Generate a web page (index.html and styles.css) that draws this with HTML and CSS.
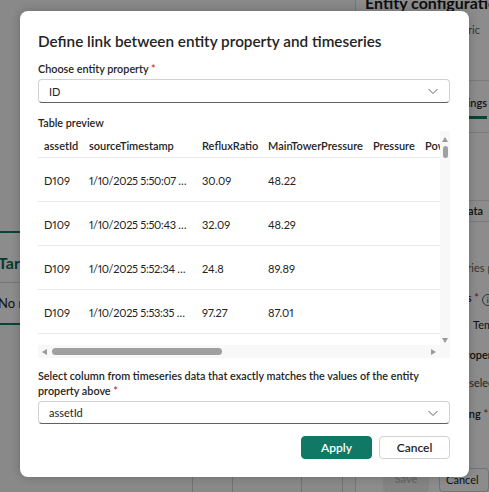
FILE: index.html
```html
<!DOCTYPE html>
<html lang="en">
<head>
<meta charset="utf-8">
<title>Define link</title>
<link rel="stylesheet" href="styles.css">
</head>
<body>
<div class="app">
  <div class="left">
    <div class="card">
      <div class="card-head">Target entity</div>
      <div class="card-body">No relationships yet</div>
    </div>
    <div class="bottom-strip">
      <div class="cell c1"></div>
      <div class="cell c2"></div>
      <div class="cell c3"></div>
      <div class="cell c4"></div>
    </div>
  </div>
  <div class="right">
    <div class="panel-title">Entity configuration</div>
    <div class="panel-sub">Microsoft Fabric</div>
    <div class="tabs"><span class="tab">Settings</span></div>
    <div class="section-head"><span>Data</span></div>
    <div class="p-line hint">Time series properties</div>
    <div class="p-line bold req-line">Properties <span class="req">*</span> <span class="info">i</span></div>
    <div class="p-line p-input">Temperature</div>
    <div class="p-line bold prop">Property</div>
    <div class="p-line sel">Not selected</div>
    <div class="p-line bold map">Mapping <span class="req">*</span></div>
    <div class="p-actions">
      <span class="btn-save">Save</span>
      <span class="btn-cancel-bg">Cancel</span>
    </div>
  </div>
</div>
<div class="overlay"></div>
<div class="dialog" role="dialog">
  <h2 class="title">Define link between entity property and timeseries</h2>
  <label class="label">Choose entity property <span class="req">*</span></label>
  <div class="dropdown">
    <span>ID</span>
    <svg class="chev" width="12" height="12" viewBox="0 0 12 12"><path d="M1.5 4 L6 8.5 L10.5 4" fill="none" stroke="#616161" stroke-width="1"/></svg>
  </div>
  <div class="label tp">Table preview</div>
  <div class="preview">
    <div class="viewport">
      <table class="grid">
        <colgroup>
          <col class="w1"><col class="w2"><col class="w3"><col class="w4"><col class="w5"><col class="w6">
        </colgroup>
        <thead>
          <tr><th>assetId</th><th>sourceTimestamp</th><th>RefluxRatio</th><th>MainTowerPressure</th><th>Pressure</th><th>Power</th></tr>
        </thead>
        <tbody>
          <tr><td>D109</td><td class="ts">1/10/2025 5:50:07 PM</td><td>30.09</td><td>48.22</td><td></td><td></td></tr>
          <tr><td>D109</td><td class="ts">1/10/2025 5:50:43 PM</td><td>32.09</td><td>48.29</td><td></td><td></td></tr>
          <tr><td>D109</td><td class="ts">1/10/2025 5:52:34 PM</td><td>24.8</td><td>89.89</td><td></td><td></td></tr>
          <tr><td>D109</td><td class="ts">1/10/2025 5:53:35 PM</td><td>97.27</td><td>87.01</td><td></td><td></td></tr>
          <tr><td>D109</td><td class="ts">1/10/2025 5:54:12 PM</td><td>51.3</td><td>60.4</td><td></td><td></td></tr>
        </tbody>
      </table>
    </div>
    <div class="vscroll">
      <span class="tri up"></span>
      <span class="vthumb"></span>
      <span class="vspace"></span>
      <span class="tri down"></span>
    </div>
    <div class="hscroll">
      <span class="tri lt"></span>
      <span class="hthumb"></span>
      <span class="hspace"></span>
      <span class="tri rt"></span>
    </div>
    <div class="corner"></div>
  </div>
  <label class="label two">Select column from timeseries data that exactly matches the values of the entity property above <span class="req">*</span></label>
  <div class="dropdown d2">
    <span>assetId</span>
    <svg class="chev" width="12" height="12" viewBox="0 0 12 12"><path d="M1.5 4 L6 8.5 L10.5 4" fill="none" stroke="#616161" stroke-width="1"/></svg>
  </div>
  <div class="actions">
    <button class="btn primary">Apply</button>
    <button class="btn">Cancel</button>
  </div>
</div>
</body>
</html>
```

FILE: styles.css
```css
html, body {
  margin: 0;
  padding: 0;
}
body {
  width: 489px;
  height: 492px;
  overflow: hidden;
  position: relative;
  font-family: Lato, "Open Sans", sans-serif;
  color: #242424;
  background: #ffffff;
}

/* background application */
.app {
  display: grid;
  grid-template-columns: 355px 134px;
  height: 492px;
}
.left {
  display: flex;
  flex-direction: column;
  background: #fafafa;
}
.card {
  margin-top: 231px;
  margin-left: -2px;
  border-top: 2px solid #117865;
  border-bottom: 2px solid #117865;
  background: #ffffff;
}
.card-head {
  font-size: 16px;
  font-weight: 700;
  color: #0e6b58;
  height: 49px;
  line-height: 60px;
  border-bottom: 1px solid #d6d6d6;
  white-space: nowrap;
}
.card-body {
  font-size: 13px;
  height: 40px;
  line-height: 40px;
  white-space: nowrap;
}
.bottom-strip {
  margin-top: auto;
  height: 16px;
  display: grid;
  grid-template-columns: 193px 40px 69px 41px;
}
.cell {
  border-right: 1px solid #d0d0d0;
}
.right {
  border-left: 1px solid #d8d8d8;
  display: flex;
  flex-direction: column;
  background: #ffffff;
  white-space: nowrap;
  font-size: 11px;
  overflow: hidden;
}
.panel-title {
  font-size: 16px;
  font-weight: 700;
  margin-top: -7px;
  padding-left: 9px;
  line-height: 20px;
  color: #1a1a1a;
}
.panel-sub {
  text-align: right;
  padding-right: 9px;
  margin-top: 7px;
  color: #616161;
  line-height: 20px;
  padding-bottom: 40px;
  border-bottom: 1px solid #e0e0e0;
}
.tabs {
  display: flex;
  justify-content: flex-end;
  padding-right: 2px;
  border-bottom: 1px solid #e0e0e0;
  height: 51px;
}
.tab {
  font-weight: 600;
  margin-top: 12px;
  line-height: 20px;
  padding-bottom: 3px;
  border-bottom: 3px solid #117865;
  align-self: flex-start;
}
.section-head {
  margin-top: 67px;
  border-top: 1px solid #e0e0e0;
  border-bottom: 1px solid #e0e0e0;
  line-height: 20px;
  text-align: right;
  padding-right: 6px;
  font-weight: 600;
}
.p-line {
  line-height: 20px;
}
.hint {
  margin-top: 36px;
  padding-left: 74px;
  color: #616161;
}
.bold { font-weight: 600; }
.req-line {
  margin-top: 10px;
  padding-left: 65px;
}
.req { color: #c4314b; }
.info {
  display: inline-block;
  width: 10px;
  height: 10px;
  border: 1px solid #616161;
  border-radius: 50%;
  font-size: 8px;
  line-height: 10px;
  text-align: center;
  font-weight: 400;
  vertical-align: -1px;
}
.p-input {
  margin-top: 7px;
  padding-left: 117px;
}
.prop {
  margin-top: 10px;
  padding-left: 103px;
}
.sel {
  margin-top: 8px;
  padding-left: 92px;
  color: #424242;
}
.map {
  margin-top: 11px;
  padding-left: 82px;
}
.p-actions {
  margin-top: auto;
  display: flex;
  gap: 10px;
  padding-left: 27px;
  height: 24px;
}
.btn-save {
  width: 88px;
  background: #f0f0f0;
  color: #bdbdbd;
  border-radius: 4px;
  text-align: center;
  line-height: 22px;
  font-weight: 600;
}
.btn-cancel-bg {
  width: 80px;
  border: 1px solid #d1d1d1;
  border-radius: 4px;
  line-height: 22px;
  padding-left: 6px;
}

.overlay {
  position: absolute;
  inset: 0;
  background: rgba(0, 0, 0, 0.45);
}

/* dialog */
.dialog {
  position: absolute;
  left: 20px;
  top: 11px;
  width: 449px;
  height: 466px;
  box-sizing: border-box;
  padding: 19px 19px 18px 18px;
  background: #ffffff;
  border-radius: 8px;
  box-shadow: 0 0 10px rgba(0, 0, 0, 0.22);
  display: flex;
  flex-direction: column;
}
.title {
  margin: 0;
  font-size: 15.3px;
  font-weight: 600;
  line-height: 22px;
  white-space: nowrap;
}
.label {
  display: block;
  font-size: 10.8px;
  font-weight: 600;
  line-height: 16px;
  margin-top: 9px;
}
.dropdown {
  margin-top: 2px;
  height: 24px;
  box-sizing: border-box;
  border: 1px solid #d1d1d1;
  border-bottom-color: #616161;
  border-radius: 4px;
  display: flex;
  align-items: center;
  justify-content: space-between;
  padding: 0 10px 0 10px;
  font-size: 11px;
}
.chev { display: block; }
.tp { margin-top: 12px; }

.preview {
  height: 227px;
  display: grid;
  grid-template-columns: 402px 10px;
  grid-template-rows: 214px 13px;
}
.viewport {
  overflow: hidden;
}
.grid {
  border-collapse: collapse;
  table-layout: fixed;
  width: 461px;
  font-size: 11px;
  font-variant-numeric: proportional-nums;
}
.w1 { width: 45px; }
.w2 { width: 113px; }
.w3 { width: 66px; }
.w4 { width: 105px; }
.w5 { width: 52px; }
.w6 { width: 80px; }
.grid th, .grid td {
  text-align: left;
  padding: 0 6px;
  white-space: nowrap;
  overflow: hidden;
  border-bottom: 1px solid #e8e8e8;
}
.grid th {
  font-weight: 600;
  height: 22px;
  padding-top: 4px;
  line-height: 22px;
}
.grid td {
  height: 44px;
  line-height: 20px;
  padding-top: 2px;
  box-sizing: border-box;
}
.grid td.ts {
  text-overflow: ellipsis;
  letter-spacing: -0.3px;
}
.vscroll {
  background: #f8f8f8;
  display: flex;
  flex-direction: column;
  align-items: center;
  padding-top: 6px;
}
.vthumb {
  width: 5px;
  height: 12px;
  border-radius: 3px;
  background: #a0a0a0;
  margin-top: 4px;
}
.vspace { flex: 1; }
.tri {
  width: 0;
  height: 0;
  display: block;
}
.tri.up {
  border-left: 3.5px solid transparent;
  border-right: 3.5px solid transparent;
  border-bottom: 5px solid #9a9a9a;
}
.tri.down {
  border-left: 3.5px solid transparent;
  border-right: 3.5px solid transparent;
  border-top: 5px solid #9a9a9a;
  margin-bottom: 2px;
}
.hscroll {
  background: #f8f8f8;
  display: flex;
  align-items: center;
  padding: 0 4px 0 4px;
}
.tri.lt {
  border-top: 3.5px solid transparent;
  border-bottom: 3.5px solid transparent;
  border-right: 5px solid #9a9a9a;
}
.tri.rt {
  border-top: 3.5px solid transparent;
  border-bottom: 3.5px solid transparent;
  border-left: 5px solid #9a9a9a;
}
.hthumb {
  margin-left: 5px;
  width: 170px;
  height: 7px;
  border-radius: 4px;
  background: #a0a0a0;
}
.hspace { flex: 1; }
.corner { background: #f8f8f8; }

.two {
  margin-top: 10px;
  line-height: 15px;
}
.d2 {
  margin-top: 3px;
  height: 23px;
}
.actions {
  margin-top: 12px;
  display: flex;
  justify-content: flex-end;
  gap: 7px;
}
.btn {
  width: 71px;
  height: 23px;
  box-sizing: border-box;
  border: 1px solid #d1d1d1;
  border-radius: 4px;
  background: #ffffff;
  font-family: inherit;
  font-size: 12px;
  font-weight: 600;
  color: #242424;
  padding: 0;
}
.btn.primary {
  background: #117865;
  border-color: #117865;
  color: #ffffff;
}
```
